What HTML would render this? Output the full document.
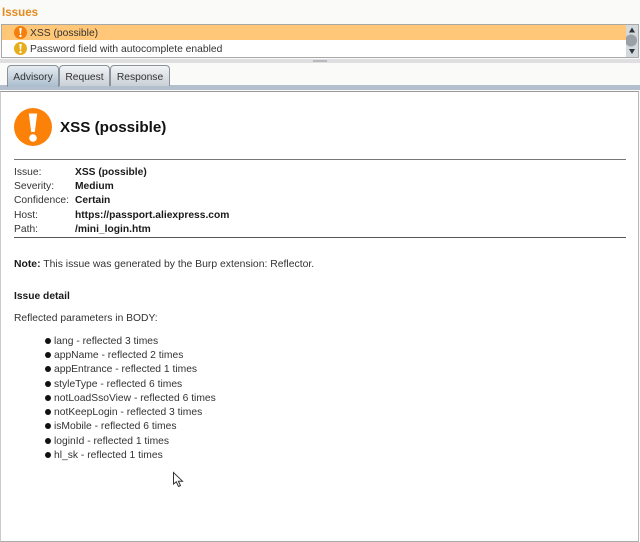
<!DOCTYPE html>
<html><head><meta charset="utf-8">
<style>
html,body{margin:0;padding:0;background:#fafaf8;}
body{width:640px;height:542px;position:relative;overflow:hidden;font-family:"Liberation Sans",sans-serif;font-size:10.3px;color:#333;}
.a{position:absolute;white-space:nowrap;line-height:14px;margin-top:1px;}
.b{font-weight:bold;color:#1a1a1a;font-size:10.25px;}
.tab{position:absolute;top:65px;height:21px;box-sizing:border-box;border:1px solid #8a939c;border-bottom:none;border-radius:4px 4px 0 0;background:linear-gradient(#f2f4f6,#c9d0d6);text-align:center;line-height:23px;color:#333;}
.dot{position:absolute;left:45px;width:6px;height:6px;border-radius:50%;background:#111;}
</style></head><body>
<div class="a" style="left:2px;top:5px;color:#e58a1f;font-weight:bold;font-size:11.6px;">Issues</div>

<div style="position:absolute;left:1px;top:24px;width:638px;height:34px;box-sizing:border-box;border:1px solid #a8a8a8;background:#fff;"></div>
<div style="position:absolute;left:2px;top:25px;width:624px;height:15px;background:#ffc777;"></div>
<svg style="position:absolute;left:14px;top:26px" width="13" height="13" viewBox="0 0 13 13"><circle cx="6.5" cy="6.5" r="6.5" fill="#f47f0c"/><path d="M5.3 2h2.4L7 8H6z" fill="#fff"/><circle cx="6.5" cy="10" r="1.2" fill="#fff"/></svg>
<svg style="position:absolute;left:14px;top:42px" width="13" height="13" viewBox="0 0 13 13"><circle cx="6.5" cy="6.5" r="6.5" fill="#e8ad1c"/><path d="M5.3 2h2.4L7 8H6z" fill="#fff"/><circle cx="6.5" cy="10" r="1.2" fill="#fff"/></svg>
<div class="a" style="left:30px;top:26px;">XSS (possible)</div>
<div class="a" style="left:30px;top:42px;">Password field with autocomplete enabled</div>

<div style="position:absolute;left:626px;top:25px;width:12px;height:32px;background:#d4d9de;"></div>
<svg style="position:absolute;left:626px;top:25px" width="12" height="32" viewBox="0 0 12 32"><path d="M6 2.500L9 7.500H3z" fill="#333"/><path d="M6 29L9 24H3z" fill="#333"/><circle cx="5" cy="15.500" r="6" fill="#9aa0a5"/></svg>

<div style="position:absolute;left:0;top:59px;width:640px;height:4px;background:#dfdfe2;"></div>
<div style="position:absolute;left:313px;top:60px;width:14px;height:2px;background:#b9b9bd;"></div>

<div style="position:absolute;left:0;top:85px;width:640px;height:5px;background:#b3bfcc;"></div>
<div class="tab" style="left:7px;width:52px;height:22px;background:linear-gradient(#e6ecf1,#a9bccd);">Advisory</div>
<div class="tab" style="left:59px;width:51px;">Request</div>
<div class="tab" style="left:110px;width:60px;">Response</div>

<div style="position:absolute;left:0;top:91px;width:639px;height:451px;box-sizing:border-box;border:1px solid #b8b8b8;border-top-color:#999;border-bottom-color:#aaa;border-left-color:#c8ccd0;background:#fff;"></div>

<svg style="position:absolute;left:14px;top:108px" width="38" height="38" viewBox="0 0 38 38"><circle cx="19" cy="19" r="19" fill="#fb8108"/><path d="M14.800 5.500h8.400L20.800 24h-3.600z" fill="#fff"/><circle cx="19" cy="30" r="3.800" fill="#fff"/></svg>
<div class="a" style="left:60px;top:118px;font-size:15.200px;font-weight:bold;line-height:18px;color:#111;">XSS (possible)</div>

<div style="position:absolute;left:14px;top:159px;width:612px;height:1px;background:#777;"></div>
<div class="a" style="left:14px;top:165px;">Issue:</div><div class="a b" style="left:75px;top:165px;">XSS (possible)</div>
<div class="a" style="left:14px;top:179px;">Severity:</div><div class="a b" style="left:75px;top:179px;">Medium</div>
<div class="a" style="left:14px;top:193px;">Confidence:</div><div class="a b" style="left:75px;top:193px;">Certain</div>
<div class="a" style="left:14px;top:208px;">Host:</div><div class="a b" style="left:75px;top:208px;">https://passport.aliexpress.com</div>
<div class="a" style="left:14px;top:222px;">Path:</div><div class="a b" style="left:75px;top:222px;">/mini_login.htm</div>
<div style="position:absolute;left:14px;top:237px;width:612px;height:1px;background:#555;"></div>

<div class="a" style="left:14px;top:257px;font-size:10.4px;"><b style="color:#1a1a1a">Note:</b> This issue was generated by the Burp extension: Reflector.</div>
<div class="a b" style="left:14px;top:289px;">Issue detail</div>
<div class="a" style="left:14px;top:311px;">Reflected parameters in BODY:</div>

<div class="dot" style="top:338px"></div><div class="a" style="left:54px;top:334px;">lang - reflected 3 times</div>
<div class="dot" style="top:352px"></div><div class="a" style="left:54px;top:348px;">appName - reflected 2 times</div>
<div class="dot" style="top:366px"></div><div class="a" style="left:54px;top:362px;">appEntrance - reflected 1 times</div>
<div class="dot" style="top:381px"></div><div class="a" style="left:54px;top:377px;">styleType - reflected 6 times</div>
<div class="dot" style="top:395px"></div><div class="a" style="left:54px;top:391px;">notLoadSsoView - reflected 6 times</div>
<div class="dot" style="top:409px"></div><div class="a" style="left:54px;top:405px;">notKeepLogin - reflected 3 times</div>
<div class="dot" style="top:423px"></div><div class="a" style="left:54px;top:419px;">isMobile - reflected 6 times</div>
<div class="dot" style="top:438px"></div><div class="a" style="left:54px;top:434px;">loginId - reflected 1 times</div>
<div class="dot" style="top:452px"></div><div class="a" style="left:54px;top:448px;">hl_sk - reflected 1 times</div>

<svg style="position:absolute;left:172px;top:471px" width="13" height="18" viewBox="0 0 13 18"><path d="M1.500 1.500V13L4.300 10.800L6.500 15.500L8.500 14.600L6.400 10.200H10.500z" fill="#fff" stroke="#333" stroke-width="1"/></svg>
</body></html>
